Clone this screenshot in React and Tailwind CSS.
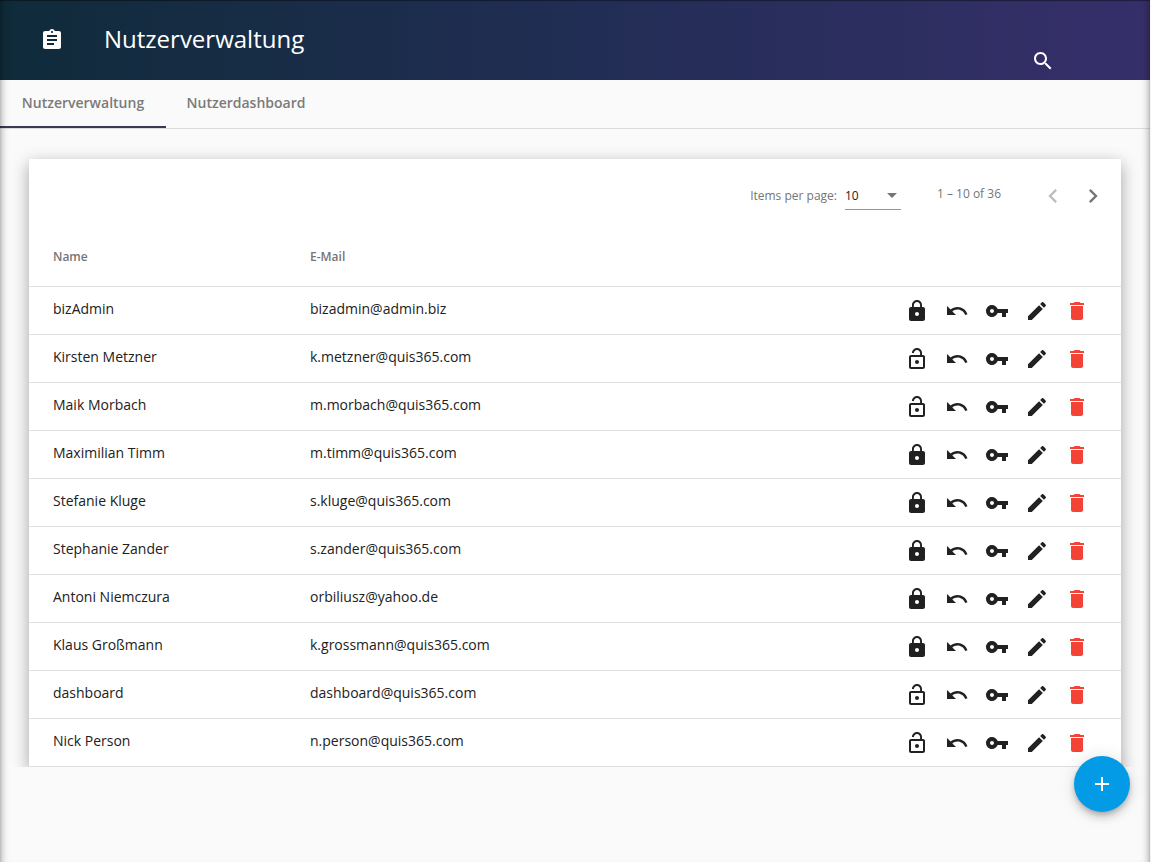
const PATHS = {
  assignment: 'M19 3h-4.18C14.4 1.84 13.3 1 12 1c-1.3 0-2.4.84-2.82 2H5c-1.1 0-2 .9-2 2v14c0 1.1.9 2 2 2h14c1.1 0 2-.9 2-2V5c0-1.1-.9-2-2-2zm-7 0c.55 0 1 .45 1 1s-.45 1-1 1-1-.45-1-1 .45-1 1-1zm2 14H7v-2h7v2zm3-4H7v-2h10v2zm0-4H7V7h10v2z',
  search: 'M15.5 14h-.79l-.28-.27C15.41 12.59 16 11.11 16 9.5 16 5.91 13.09 3 9.5 3S3 5.91 3 9.5 5.91 16 9.5 16c1.61 0 3.09-.59 4.23-1.57l.27.28v.79l5 4.99L20.49 19l-4.99-5zm-6 0C7.01 14 5 11.99 5 9.5S7.01 5 9.5 5 14 7.01 14 9.5 11.99 14 9.5 14z',
  lock: 'M18 8h-1V6c0-2.76-2.24-5-5-5S7 3.24 7 6v2H6c-1.1 0-2 .9-2 2v10c0 1.1.9 2 2 2h12c1.1 0 2-.9 2-2V10c0-1.1-.9-2-2-2zm-6 9c-1.1 0-2-.9-2-2s.9-2 2-2 2 .9 2 2-.9 2-2 2zm3.1-9H8.9V6c0-1.71 1.39-3.1 3.1-3.1 1.71 0 3.1 1.39 3.1 3.1v2z',
  lockOpen: 'M12 17c1.1 0 2-.9 2-2s-.9-2-2-2-2 .9-2 2 .9 2 2 2zm6-9h-1V6c0-2.76-2.24-5-5-5S7 3.24 7 6h1.9c0-1.71 1.39-3.1 3.1-3.1 1.71 0 3.1 1.39 3.1 3.1v2H6c-1.1 0-2 .9-2 2v10c0 1.1.9 2 2 2h12c1.1 0 2-.9 2-2V10c0-1.1-.9-2-2-2zm0 12H6V10h12v10z',
  undo: 'M12.5 8c-2.65 0-5.05.99-6.9 2.6L2 7v9h9l-3.62-3.62c1.39-1.16 3.16-1.88 5.12-1.88 3.54 0 6.55 2.31 7.6 5.5l2.37-.78C21.08 11.03 17.15 8 12.5 8z',
  key: 'M12.65 10C11.83 7.67 9.61 6 7 6c-3.31 0-6 2.69-6 6s2.69 6 6 6c2.61 0 4.83-1.67 5.65-4H17v4h4v-4h2v-4H12.65zM7 14c-1.1 0-2-.9-2-2s.9-2 2-2 2 .9 2 2-.9 2-2 2z',
  edit: 'M3 17.25V21h3.75L17.81 9.94l-3.75-3.75L3 17.25zM20.71 7.04c.39-.39.39-1.02 0-1.41l-2.34-2.34c-.39-.39-1.02-.39-1.41 0l-1.83 1.83 3.75 3.75 1.83-1.83z',
  trash: 'M6 19c0 1.1.9 2 2 2h8c1.1 0 2-.9 2-2V7H6v12zM19 4h-3.5l-1-1h-5l-1 1H5v2h14V4z',
  prev: 'M15.41 7.41L14 6l-6 6 6 6 1.41-1.41L10.83 12z',
  next: 'M10 6L8.59 7.41 13.17 12l-4.58 4.59L10 18l6-6z',
  add: 'M19 13h-6v6h-2v-6H5v-2h6V5h2v6h6v2z',
};

function Icon({ name, className = 'size-6' }) {
  return (
    <svg viewBox="0 0 24 24" fill="currentColor" aria-hidden="true" className={className}>
      <path d={PATHS[name]} />
    </svg>
  );
}

const USERS = [
  { name: 'bizAdmin', mail: 'bizadmin@admin.biz', locked: true },
  { name: 'Kirsten Metzner', mail: 'k.metzner@quis365.com', locked: false },
  { name: 'Maik Morbach', mail: 'm.morbach@quis365.com', locked: false },
  { name: 'Maximilian Timm', mail: 'm.timm@quis365.com', locked: true },
  { name: 'Stefanie Kluge', mail: 's.kluge@quis365.com', locked: true },
  { name: 'Stephanie Zander', mail: 's.zander@quis365.com', locked: true },
  { name: 'Antoni Niemczura', mail: 'orbiliusz@yahoo.de', locked: true },
  { name: 'Klaus Großmann', mail: 'k.grossmann@quis365.com', locked: true },
  { name: 'dashboard', mail: 'dashboard@quis365.com', locked: false },
  { name: 'Nick Person', mail: 'n.person@quis365.com', locked: false },
];

function Header() {
  return (
    <header className="flex h-20 items-center bg-linear-to-r from-[#0f2b3a] via-[#212d54] to-[#362f6a] pr-[95px] pl-10 text-white">
      <Icon name="assignment" />
      <h1 className="ml-10 grow pb-0.5 text-2xl font-medium">Nutzerverwaltung</h1>
      <button type="button" aria-label="Suchen" className="mt-[42px]">
        <Icon name="search" />
      </button>
    </header>
  );
}

function Tabs() {
  return (
    <nav className="flex h-[49px] border-b border-[#dcdcdc] text-sm font-semibold text-[#7a7a7a]">
      <a href="#verwaltung" aria-current="page" className="flex w-[166px] items-center justify-center border-b-2 border-[#3b3a50]">
        Nutzerverwaltung
      </a>
      <a href="#dashboard" className="flex w-40 items-center justify-center border-b-2 border-transparent">
        Nutzerdashboard
      </a>
    </nav>
  );
}

function Paginator() {
  return (
    <div className="flex h-[74px] items-center justify-end pr-2 text-xs text-[#757575]">
      <label htmlFor="page-size">Items per page:</label>
      <div className="relative ml-2 flex w-14 items-center border-b border-[#949494]">
        <select id="page-size" defaultValue="10" className="h-[26px] w-full appearance-none bg-transparent text-[#212121]">
          <option>5</option>
          <option>10</option>
          <option>25</option>
        </select>
        <svg viewBox="0 0 10 5" fill="currentColor" aria-hidden="true" className="pointer-events-none absolute right-1 h-[5px] w-2.5">
          <path d="M0 0h10L5 5z" />
        </svg>
      </div>
      <span className="mr-8 ml-9 pb-1">1 – 10 of 36</span>
      <button type="button" aria-label="Vorherige Seite" disabled className="flex size-10 items-center justify-center text-[#bdbdbd]">
        <Icon name="prev" className="size-7" />
      </button>
      <button type="button" aria-label="Nächste Seite" className="flex size-10 items-center justify-center">
        <Icon name="next" className="size-7" />
      </button>
    </div>
  );
}

function UserRow({ user }) {
  return (
    <tr className="h-12 border-t border-[#e0e0e0]">
      <td className="pb-0.5 pl-6">{user.name}</td>
      <td className="pb-0.5">{user.mail}</td>
      <td className="pt-0.5 pr-8">
        <div className="flex justify-end gap-4">
          <button type="button" aria-label={user.locked ? 'Entsperren' : 'Sperren'}>
            <Icon name={user.locked ? 'lock' : 'lockOpen'} />
          </button>
          <button type="button" aria-label="Zurücksetzen"><Icon name="undo" /></button>
          <button type="button" aria-label="Passwort"><Icon name="key" /></button>
          <button type="button" aria-label="Bearbeiten"><Icon name="edit" /></button>
          <button type="button" aria-label="Löschen" className="text-[#f44336]"><Icon name="trash" /></button>
        </div>
      </td>
    </tr>
  );
}

export default function App() {
  return (
    <div className="relative min-h-screen border-r border-[#f5f5f5] bg-[#fafafa] font-['Open_Sans',sans-serif] text-[#212121]">
      <Header />
      <Tabs />
      <main className="overflow-hidden px-[29px] pt-[30px]">
        <section className="bg-white shadow-[0_5px_16px_rgba(0,0,0,0.35)]">
          <Paginator />
          <table className="w-full table-fixed border-b border-[#e0e0e0] text-left text-sm">
            <thead>
              <tr className="h-[53px] text-xs text-[#757575]">
                <th scope="col" className="w-[281px] pb-1 pl-6 font-semibold">Name</th>
                <th scope="col" className="pb-1 font-semibold">E-Mail</th>
                <th aria-label="Aktionen" />
              </tr>
            </thead>
            <tbody>
              {USERS.map((user) => <UserRow key={user.mail} user={user} />)}
            </tbody>
          </table>
        </section>
      </main>
      <button
        type="button"
        aria-label="Nutzer hinzufügen"
        className="fixed right-[21px] bottom-[50px] flex size-14 items-center justify-center rounded-full bg-[#039be5] text-white shadow-[0_3px_5px_-1px_rgba(0,0,0,0.2),0_6px_10px_rgba(0,0,0,0.14),0_1px_18px_rgba(0,0,0,0.12)]"
      >
        <Icon name="add" />
      </button>
      <div className="pointer-events-none absolute inset-0 shadow-[inset_8px_0_8px_-8px_rgba(0,0,0,0.45),inset_-8px_0_8px_-8px_rgba(0,0,0,0.45),inset_0_1px_1px_rgba(0,0,0,0.4)]" />
    </div>
  );
}
